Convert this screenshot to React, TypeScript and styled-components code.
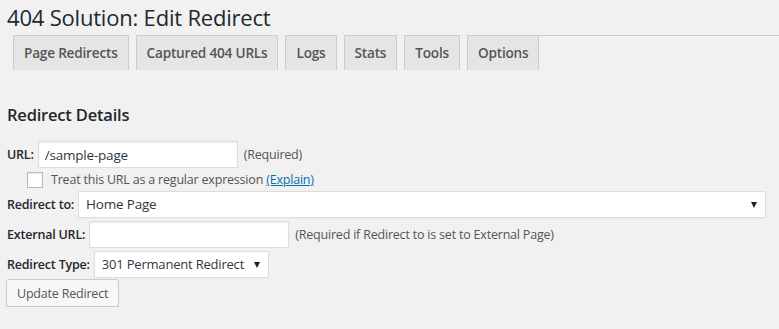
import React from "react";
import styled, { createGlobalStyle } from "styled-components";

const GlobalStyle = createGlobalStyle`
    html, body {
        margin: 0;
        background: #f1f1f1;
    }
    body {
        font-family: "Open Sans", "Noto Sans", sans-serif;
        font-size: 13px;
        color: #444;
    }
`;

const Wrap = styled.div`
    padding: 0 13px 0 7px;
`;

const Title = styled.h1`
    margin: 0;
    padding: 3px 0 0;
    height: 32px;
    font-size: 22px;
    line-height: 29px;
    font-weight: 400;
    color: #23282d;
    letter-spacing: -0.2px;
`;

const TabBar = styled.div`
    display: flex;
    margin: 0 -13px 0 6px;
    gap: 7px;
`;

const Tab = styled.a`
    display: block;
    height: 34px;
    line-height: 34px;
    padding: 0 10px;
    background: #e5e5e5;
    border: 1px solid #ccc;
    border-bottom: none;
    font-size: 13.6px;
    font-weight: 600;
    color: #555;
    text-decoration: none;
    letter-spacing: -0.2px;
`;

const TabFill = styled.div`
    flex: 1;
    border-top: 1px solid #ccc;
    margin-left: -7px;
`;

const SectionTitle = styled.h2`
    margin: 34px 0 15px;
    font-size: 16.5px;
    line-height: 22px;
    font-weight: 600;
    color: #23282d;
    letter-spacing: -0.2px;
`;

const Row = styled.div<{ $indent?: number }>`
    display: flex;
    align-items: center;
    gap: 4px;
    margin-bottom: 3px;
    padding-left: ${(p) => p.$indent ?? 0}px;
`;

const Label = styled.label`
    font-weight: 600;
    font-size: 12.5px;
    color: #23282d;
    letter-spacing: -0.2px;
`;

const Note = styled.span`
    font-size: 12.5px;
    color: #555;
    margin-left: 2px;
    letter-spacing: -0.2px;
`;

const TextInput = styled.input<{ $width: number }>`
    box-sizing: border-box;
    width: ${(p) => p.$width}px;
    height: 27px;
    padding: 0 6px;
    border: 1px solid #ddd;
    background: #fff;
    box-shadow: inset 0 1px 2px rgba(0, 0, 0, 0.07);
    font-family: inherit;
    font-size: 13.5px;
    color: #32373c;
    outline: none;
    letter-spacing: -0.2px;
`;

const Checkbox = styled.span`
    display: inline-block;
    box-sizing: border-box;
    width: 16px;
    height: 16px;
    border: 1px solid #b4b9be;
    background: #fff;
    box-shadow: inset 0 1px 2px rgba(0, 0, 0, 0.1);
    margin-right: 4px;
`;

const CheckText = styled.span`
    font-size: 12.5px;
    color: #555;
    letter-spacing: -0.2px;
`;

const Explain = styled.a`
    color: #0073aa;
    text-decoration: underline;
`;

const SelectBox = styled.div<{ $grow?: boolean }>`
    position: relative;
    box-sizing: border-box;
    ${(p) => (p.$grow ? "flex: 1; font-size: 13.5px;" : "font-size: 13px;")}
    height: 27px;
    line-height: 25px;
    padding: 0 24px 0 7px;
    border: 1px solid #ddd;
    background: #fff;
    box-shadow: 0 1px 1px -1px rgba(0, 0, 0, 0.1);
    color: #32373c;
    letter-spacing: -0.2px;

    &::after {
        content: "";
        position: absolute;
        right: 8px;
        top: 10px;
        border-left: 3px solid transparent;
        border-right: 3px solid transparent;
        border-top: 6px solid #222;
    }
`;

const Button = styled.button`
    box-sizing: border-box;
    height: 28px;
    padding: 0 10px;
    margin: -2px 0 0 -1px;
    border: 1px solid #ccc;
    border-radius: 3px;
    background: #f7f7f7;
    box-shadow: 0 1px 0 #ccc;
    font-family: inherit;
    font-size: 12.5px;
    color: #555;
    letter-spacing: -0.2px;
    cursor: pointer;
`;

const tabs = ["Page Redirects", "Captured 404 URLs", "Logs", "Stats", "Tools", "Options"];

export default function App() {
    return (
        <Wrap>
            <GlobalStyle />
            <Title>404 Solution: Edit Redirect</Title>
            <TabBar>
                {tabs.map((t) => (
                    <Tab key={t} href="#">
                        {t}
                    </Tab>
                ))}
                <TabFill />
            </TabBar>
            <SectionTitle>Redirect Details</SectionTitle>
            <Row>
                <Label>URL:</Label>
                <TextInput $width={200} defaultValue="/sample-page" />
                <Note>(Required)</Note>
            </Row>
            <Row $indent={20}>
                <Checkbox />
                <CheckText>
                    Treat this URL as a regular expression <Explain href="#">(Explain)</Explain>
                </CheckText>
            </Row>
            <Row>
                <Label>Redirect to:</Label>
                <SelectBox $grow>Home Page</SelectBox>
            </Row>
            <Row>
                <Label>External URL:</Label>
                <TextInput $width={200} />
                <Note>(Required if Redirect to is set to External Page)</Note>
            </Row>
            <Row>
                <Label>Redirect Type:</Label>
                <SelectBox>301 Permanent Redirect</SelectBox>
            </Row>
            <Button>Update Redirect</Button>
        </Wrap>
    );
}
